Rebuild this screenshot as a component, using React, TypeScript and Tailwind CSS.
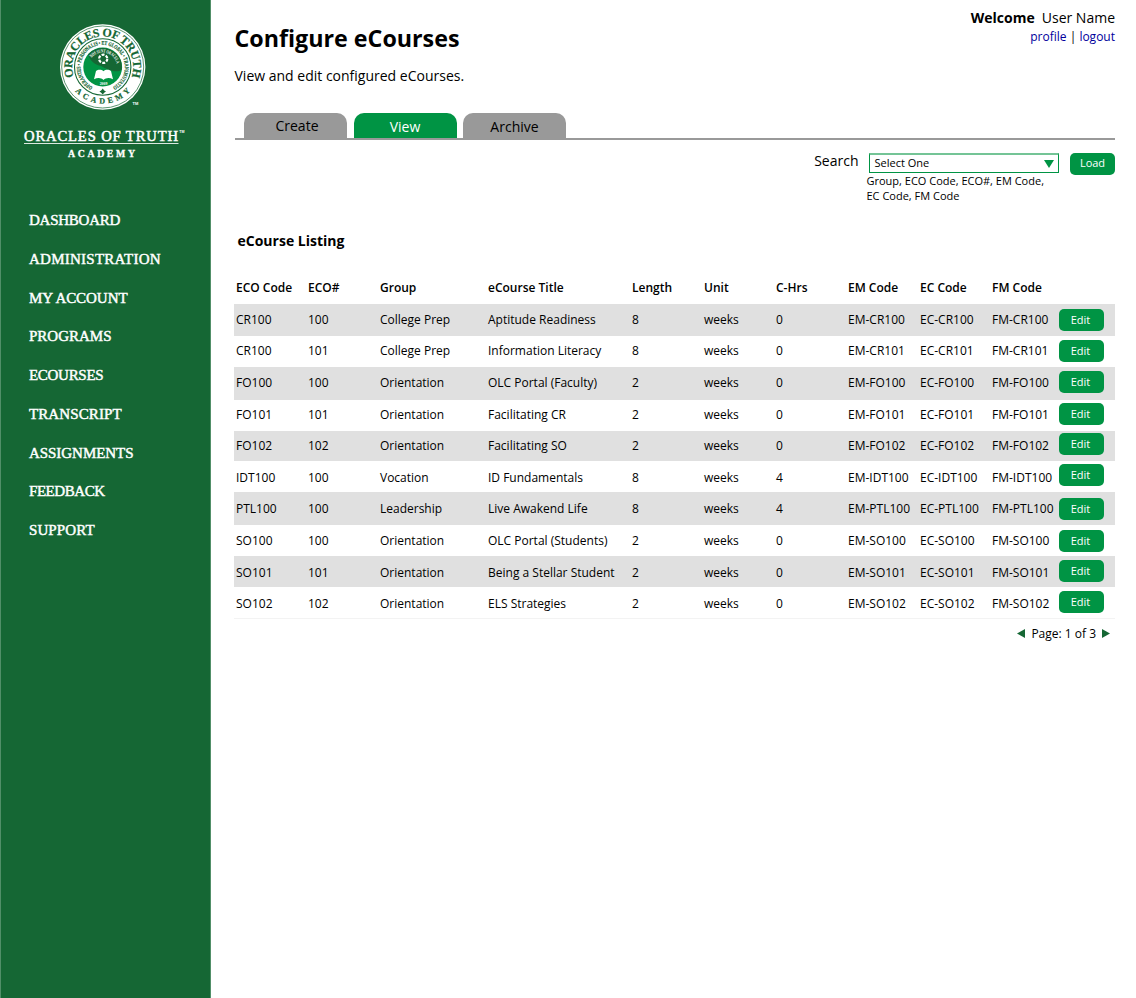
import React from "react";

const nav: { label: string; tracking: string }[] = [
  { label: "DASHBOARD", tracking: "tracking-[-0.25px]" },
  { label: "ADMINISTRATION", tracking: "tracking-[0.25px]" },
  { label: "MY ACCOUNT", tracking: "tracking-[-0.05px]" },
  { label: "PROGRAMS", tracking: "tracking-normal" },
  { label: "ECOURSES", tracking: "tracking-[-0.3px]" },
  { label: "TRANSCRIPT", tracking: "tracking-[0.1px]" },
  { label: "ASSIGNMENTS", tracking: "tracking-[-0.05px]" },
  { label: "FEEDBACK", tracking: "tracking-[-0.45px]" },
  { label: "SUPPORT", tracking: "tracking-[0.1px]" },
];

const headers = ["ECO Code", "ECO#", "Group", "eCourse Title", "Length", "Unit", "C-Hrs", "EM Code", "EC Code", "FM Code"];

type Row = { cells: string[]; suffix: string; row: string; text: string; button: string };

const rows: Row[] = [
  { cells: ["CR100", "100", "College Prep", "Aptitude Readiness", "8", "weeks", "0"], suffix: "CR100", row: "h-8", text: "pt-1.5", button: "mt-[5px]" },
  { cells: ["CR100", "101", "College Prep", "Information Literacy", "8", "weeks", "0"], suffix: "CR101", row: "h-[31px]", text: "pt-[5px]", button: "mt-1" },
  { cells: ["FO100", "100", "Orientation", "OLC Portal (Faculty)", "2", "weeks", "0"], suffix: "FO100", row: "h-[33px]", text: "pt-1.5", button: "mt-1" },
  { cells: ["FO101", "101", "Orientation", "Facilitating CR", "2", "weeks", "0"], suffix: "FO101", row: "h-[31px]", text: "pt-[5px]", button: "mt-[3px]" },
  { cells: ["FO102", "102", "Orientation", "Facilitating SO", "2", "weeks", "0"], suffix: "FO102", row: "h-[30px]", text: "pt-[5px]", button: "mt-0.5" },
  { cells: ["IDT100", "100", "Vocation", "ID Fundamentals", "8", "weeks", "4"], suffix: "IDT100", row: "h-[31px]", text: "pt-[7px]", button: "mt-[3px]" },
  { cells: ["PTL100", "100", "Leadership", "Live Awakend Life", "8", "weeks", "4"], suffix: "PTL100", row: "h-[33px]", text: "pt-[7px]", button: "mt-1.5" },
  { cells: ["SO100", "100", "Orientation", "OLC Portal (Students)", "2", "weeks", "0"], suffix: "SO100", row: "h-[31px]", text: "pt-1.5", button: "mt-[5px]" },
  { cells: ["SO101", "101", "Orientation", "Being a Stellar Student", "2", "weeks", "0"], suffix: "SO101", row: "h-[31px]", text: "pt-[7px]", button: "mt-1" },
  { cells: ["SO102", "102", "Orientation", "ELS Strategies", "2", "weeks", "0"], suffix: "SO102", row: "h-8 border-b border-[#f3f3f3]", text: "pt-[7px]", button: "mt-1" },
];

const columns = "grid grid-cols-[72px_72px_108px_144px_72px_72px_72px_72px_72px_66.5px_56.5px] pl-0.5 whitespace-nowrap";

function Seal() {
  return (
    <svg className="block" width="210" height="170" viewBox="0 0 210 170" fontFamily="'Liberation Serif', serif" fill="#fff">
      <defs>
        <path id="outerTop" d="M75.1 79.9 A30.5 30.5 0 1 1 130.3 79.9" />
        <path id="outerBottom" d="M67 76 A36.9 36.9 0 0 0 138.4 76" />
        <path id="middle" d="M92.6 86.8 A22.2 22.2 0 1 1 112.8 86.8" />
        <path id="inner" d="M91.5 58 A14.3 14.3 0 0 1 117 68" />
      </defs>
      <circle cx="102.7" cy="67" r="42.7" />
      <circle cx="102.7" cy="67" r="41" fill="none" stroke="#156734" strokeWidth="0.7" />
      <circle cx="102.7" cy="67" r="28.2" fill="none" stroke="#156734" strokeWidth="1.1" />
      <circle cx="102.7" cy="67" r="19.4" fill="#009444" />
      <path d="M88 54.5 A19.4 19.4 0 0 1 121.8 69.5 C117 74 106 69 101 66 C93 64 90 60 88 54.5Z" fill="#156734" />
      <g fill="#156734" fontWeight="bold">
        <text fontSize="12" stroke="#156734" strokeWidth="0.2">
          <textPath href="#outerTop" startOffset="50%" textAnchor="middle" textLength="116" lengthAdjust="spacing">ORACLES OF TRUTH</textPath>
        </text>
        <text fontSize="8" stroke="#156734" strokeWidth="0.2">
          <textPath href="#outerBottom" startOffset="50%" textAnchor="middle" textLength="62" lengthAdjust="spacing">ACADEMY</textPath>
        </text>
        <text fontSize="5.6" stroke="#156734" strokeWidth="0.2">
          <textPath href="#middle" startOffset="50%" textAnchor="middle" textLength="118" lengthAdjust="spacingAndGlyphs">OPERANTES • PERSONALIS • ET GLOBAL • TRANSMUTATIO</textPath>
        </text>
      </g>
      <path d="M102.7 88.6 L104.2 90.4 L106 91.6 L104.2 92.8 L102.7 94.6 L101.2 92.8 L99.4 91.6 L101.2 90.4Z" fill="#156734" />
      <text fontSize="4.8" fontWeight="bold">
        <textPath href="#inner" textLength="32" lengthAdjust="spacingAndGlyphs">NOS SUNT ORACULA</textPath>
      </text>
      <circle cx="103.2" cy="58.8" r="4.1" fill="none" stroke="#fff" strokeWidth="2.2" strokeDasharray="3 1.29" />
      <path d="M96 71 C98 69.3 101.5 69.3 103.5 71.2 C105.5 69.3 109 69.3 111 71 L113 79.3 C109 77.3 106 77.8 103.5 80 C101 77.8 98 77.3 94 79.3Z" />
      <text x="103.5" y="84.8" fontSize="3.8" fontWeight="bold" textAnchor="middle">2009</text>
      <text x="132.5" y="105" fontSize="4" fontWeight="bold" fontFamily="'Liberation Sans', sans-serif">TM</text>
      <text x="24" y="140.6" fontSize="14.6" textLength="154" lengthAdjust="spacing" stroke="#fff" strokeWidth="0.5">ORACLES OF TRUTH</text>
      <text x="179.3" y="133" fontSize="3.6" fontWeight="bold" fontFamily="'Liberation Sans', sans-serif">TM</text>
      <rect x="24" y="143" width="154.5" height="1" fillOpacity="0.85" />
      <text x="68" y="156.6" fontSize="9.8" fontWeight="bold" textLength="67" lengthAdjust="spacing" stroke="#fff" strokeWidth="0.3">ACADEMY</text>
    </svg>
  );
}

function Tab({ label, active, raised }: { label: string; active?: boolean; raised?: boolean }) {
  return (
    <button
      className={`flex h-[25px] w-[103px] justify-center rounded-t-[10px] text-sm leading-5 ${raised ? "pt-[3px] pl-[3px]" : "pt-1"} ${
        active ? "bg-[#009444] text-white" : "bg-[#999] text-black"
      }`}
    >
      {label}
    </button>
  );
}

export default function App() {
  return (
    <div className="flex h-[998px] w-[1136px] overflow-hidden bg-white font-['Open_Sans',sans-serif] text-black">
      <aside className="w-[211px] shrink-0 border-x border-[#518f68] bg-[#156734]">
        <div className="-ml-px">
          <Seal />
        </div>
        <nav className="flex flex-col pt-[31px] pl-7 font-['Liberation_Serif',serif] text-[15px] text-white [-webkit-text-stroke:0.45px_white]">
          {nav.map((n) => (
            <a key={n.label} className={`h-[38.75px] leading-[38.75px] whitespace-nowrap ${n.tracking}`}>
              {n.label}
            </a>
          ))}
        </nav>
      </aside>

      <main className="flex w-[904px] flex-col pl-[23px]">
        <header className="flex h-[113px] justify-between pl-[0.5px]">
          <div>
            <h1 className="mt-[22px] text-[23.25px] leading-8 font-bold">Configure eCourses</h1>
            <p className="mt-3 text-sm leading-5">View and edit configured eCourses.</p>
          </div>
          <div className="pt-2 text-right">
            <p className="text-sm leading-5">
              <b className="mr-[7px]">Welcome</b>User Name
            </p>
            <p className="text-[12px] leading-[18px]">
              <a className="text-[#00009c]">profile</a> | <a className="text-[#00009c]">logout</a>
            </p>
          </div>
        </header>

        <div className="ml-px flex gap-[6.5px] border-b-2 border-[#999] pl-[9px]">
          <Tab label="Create" raised />
          <Tab label="View" active />
          <Tab label="Archive" />
        </div>

        <section className="flex h-[91px] items-start justify-end pt-[13px]">
          <span className="mr-[7.5px] -mt-0.5 text-sm leading-5">Search</span>
          <div className="w-[204px]">
            <div className="ml-[3px] flex h-5 w-[190px] items-center justify-between border border-t-2 border-[#009444] border-t-[#74c496] pr-1 pl-[4.5px] text-[11px]">
              Select One
              <svg width="10" height="8" viewBox="0 0 10 8" fill="#009444">
                <path d="M0 0H10L5 8Z" />
              </svg>
            </div>
            <p className="pl-[0.5px] text-[11px] leading-[15px]">
              Group, ECO Code, ECO#, EM Code,
              <br />
              EC Code, FM Code
            </p>
          </div>
          <button className="h-[22px] w-[45px] rounded-[5px] bg-[#009444] pb-0.5 text-[11px] text-white">Load</button>
        </section>

        <h2 className="pl-[3.5px] text-sm leading-5 font-bold">eCourse Listing</h2>

        <section className="mt-[27px] text-[12px] leading-5">
          <div className={`${columns} h-[26px] font-semibold`}>
            {headers.map((h) => (
              <span key={h}>{h}</span>
            ))}
          </div>
          {rows.map((r, i) => (
            <div key={i} className={`${columns} ${r.row} ${i % 2 === 0 ? "bg-[#e0e0e0]" : "bg-white"}`}>
              {[...r.cells, `EM-${r.suffix}`, `EC-${r.suffix}`, `FM-${r.suffix}`].map((c, j) => (
                <span key={j} className={r.text}>
                  {c}
                </span>
              ))}
              <button className={`h-[22px] w-[45px] rounded-[5px] bg-[#009444] pr-px text-[11px] text-white ${r.button}`}>Edit</button>
            </div>
          ))}
        </section>

        <div className="mt-[5px] flex items-center justify-end gap-1.5 pr-[5px] text-[12px] leading-5">
          <svg className="-mt-px" width="8" height="9" viewBox="0 0 8 9" fill="#156734">
            <path d="M8 0V9L0 4.5Z" />
          </svg>
          Page: 1 of 3
          <svg className="-mt-px" width="8" height="9" viewBox="0 0 8 9" fill="#156734">
            <path d="M0 0V9L8 4.5Z" />
          </svg>
        </div>
      </main>
    </div>
  );
}
